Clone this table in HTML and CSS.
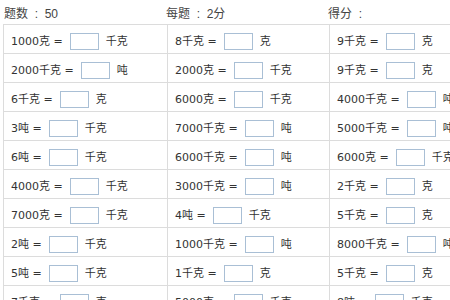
FILE: index.html
```
<html lang="zh-CN">
<head>
	<title>重量单位换算</title>
<link rel="stylesheet" href="styles.css">
</head>
<body>
	<div id="info">
		<span class="info-item">题数 &nbsp;:&nbsp; 50</span>
		<span class="info-item">每题 &nbsp;:&nbsp; 2分</span>
		<span class="info-item">得分 &nbsp;:</span>
	</div>
	<table id="quiz">
		<colgroup>
			<col class="c1">
			<col class="c2">
			<col class="c3">
		</colgroup>
		<tr>
			<td>1000克 = <span class="blank"></span> <span class="unit">千克</span></td>
			<td>8千克 = <span class="blank"></span> <span class="unit">克</span></td>
			<td>9千克 = <span class="blank"></span> <span class="unit">克</span></td>
		</tr>
		<tr>
			<td>2000千克 = <span class="blank"></span> <span class="unit">吨</span></td>
			<td>2000克 = <span class="blank"></span> <span class="unit">千克</span></td>
			<td>9千克 = <span class="blank"></span> <span class="unit">克</span></td>
		</tr>
		<tr>
			<td>6千克 = <span class="blank"></span> <span class="unit">克</span></td>
			<td>6000克 = <span class="blank"></span> <span class="unit">千克</span></td>
			<td>4000千克 = <span class="blank"></span> <span class="unit">吨</span></td>
		</tr>
		<tr>
			<td>3吨 = <span class="blank"></span> <span class="unit">千克</span></td>
			<td>7000千克 = <span class="blank"></span> <span class="unit">吨</span></td>
			<td>5000千克 = <span class="blank"></span> <span class="unit">吨</span></td>
		</tr>
		<tr>
			<td>6吨 = <span class="blank"></span> <span class="unit">千克</span></td>
			<td>6000千克 = <span class="blank"></span> <span class="unit">吨</span></td>
			<td>6000克 = <span class="blank"></span> <span class="unit">千克</span></td>
		</tr>
		<tr>
			<td>4000克 = <span class="blank"></span> <span class="unit">千克</span></td>
			<td>3000千克 = <span class="blank"></span> <span class="unit">吨</span></td>
			<td>2千克 = <span class="blank"></span> <span class="unit">克</span></td>
		</tr>
		<tr>
			<td>7000克 = <span class="blank"></span> <span class="unit">千克</span></td>
			<td>4吨 = <span class="blank"></span> <span class="unit">千克</span></td>
			<td>5千克 = <span class="blank"></span> <span class="unit">克</span></td>
		</tr>
		<tr>
			<td>2吨 = <span class="blank"></span> <span class="unit">千克</span></td>
			<td>1000千克 = <span class="blank"></span> <span class="unit">吨</span></td>
			<td>8000千克 = <span class="blank"></span> <span class="unit">吨</span></td>
		</tr>
		<tr>
			<td>5吨 = <span class="blank"></span> <span class="unit">千克</span></td>
			<td>1千克 = <span class="blank"></span> <span class="unit">克</span></td>
			<td>5千克 = <span class="blank"></span> <span class="unit">克</span></td>
		</tr>
		<tr>
			<td>7千克 = <span class="blank"></span> <span class="unit">克</span></td>
			<td>5000克 = <span class="blank"></span> <span class="unit">千克</span></td>
			<td>8吨 = <span class="blank"></span> <span class="unit">千克</span></td>
		</tr>
	</table>
</body>
</html>
```
FILE: styles.css
```
body {
	margin: 0;
	padding: 0 0 0 3px;
	background-color: white;
	color: #333;
	font-family: "DejaVu Sans", "Noto Sans CJK SC", sans-serif;
	font-size: 11px;
	width: 500px;
}

#info {
	display: flex;
	height: 24px;
	align-items: center;
	padding-left: 1px;
	font-family: "Liberation Sans", "Noto Sans CJK SC", sans-serif;
	font-size: 12px;
	color: #444;
}

.info-item {
	width: 162px;
}

#quiz {
	border-collapse: collapse;
	table-layout: fixed;
	width: 490px;
	font-family: "DejaVu Sans", "Noto Sans CJK SC", sans-serif;
	font-size: 11px;
	color: #333;
}

.c1 {
	width: 164px;
}

.c2 {
	width: 162px;
}

.c3 {
	width: 164px;
}

#quiz td {
	border: 1px solid #dcdcdc;
	height: 29px;
	padding: 4px 0 0 7px;
	white-space: nowrap;
	box-sizing: border-box;
	color: #333;
}

.blank {
	display: inline-block;
	width: 27px;
	height: 15px;
	border: 1px solid #a9bfd5;
	background-color: white;
	vertical-align: middle;
	margin: 0 3px 0 4px;
}

.unit {
	font-family: "Noto Sans CJK SC", sans-serif;
	color: #333;
}
```
